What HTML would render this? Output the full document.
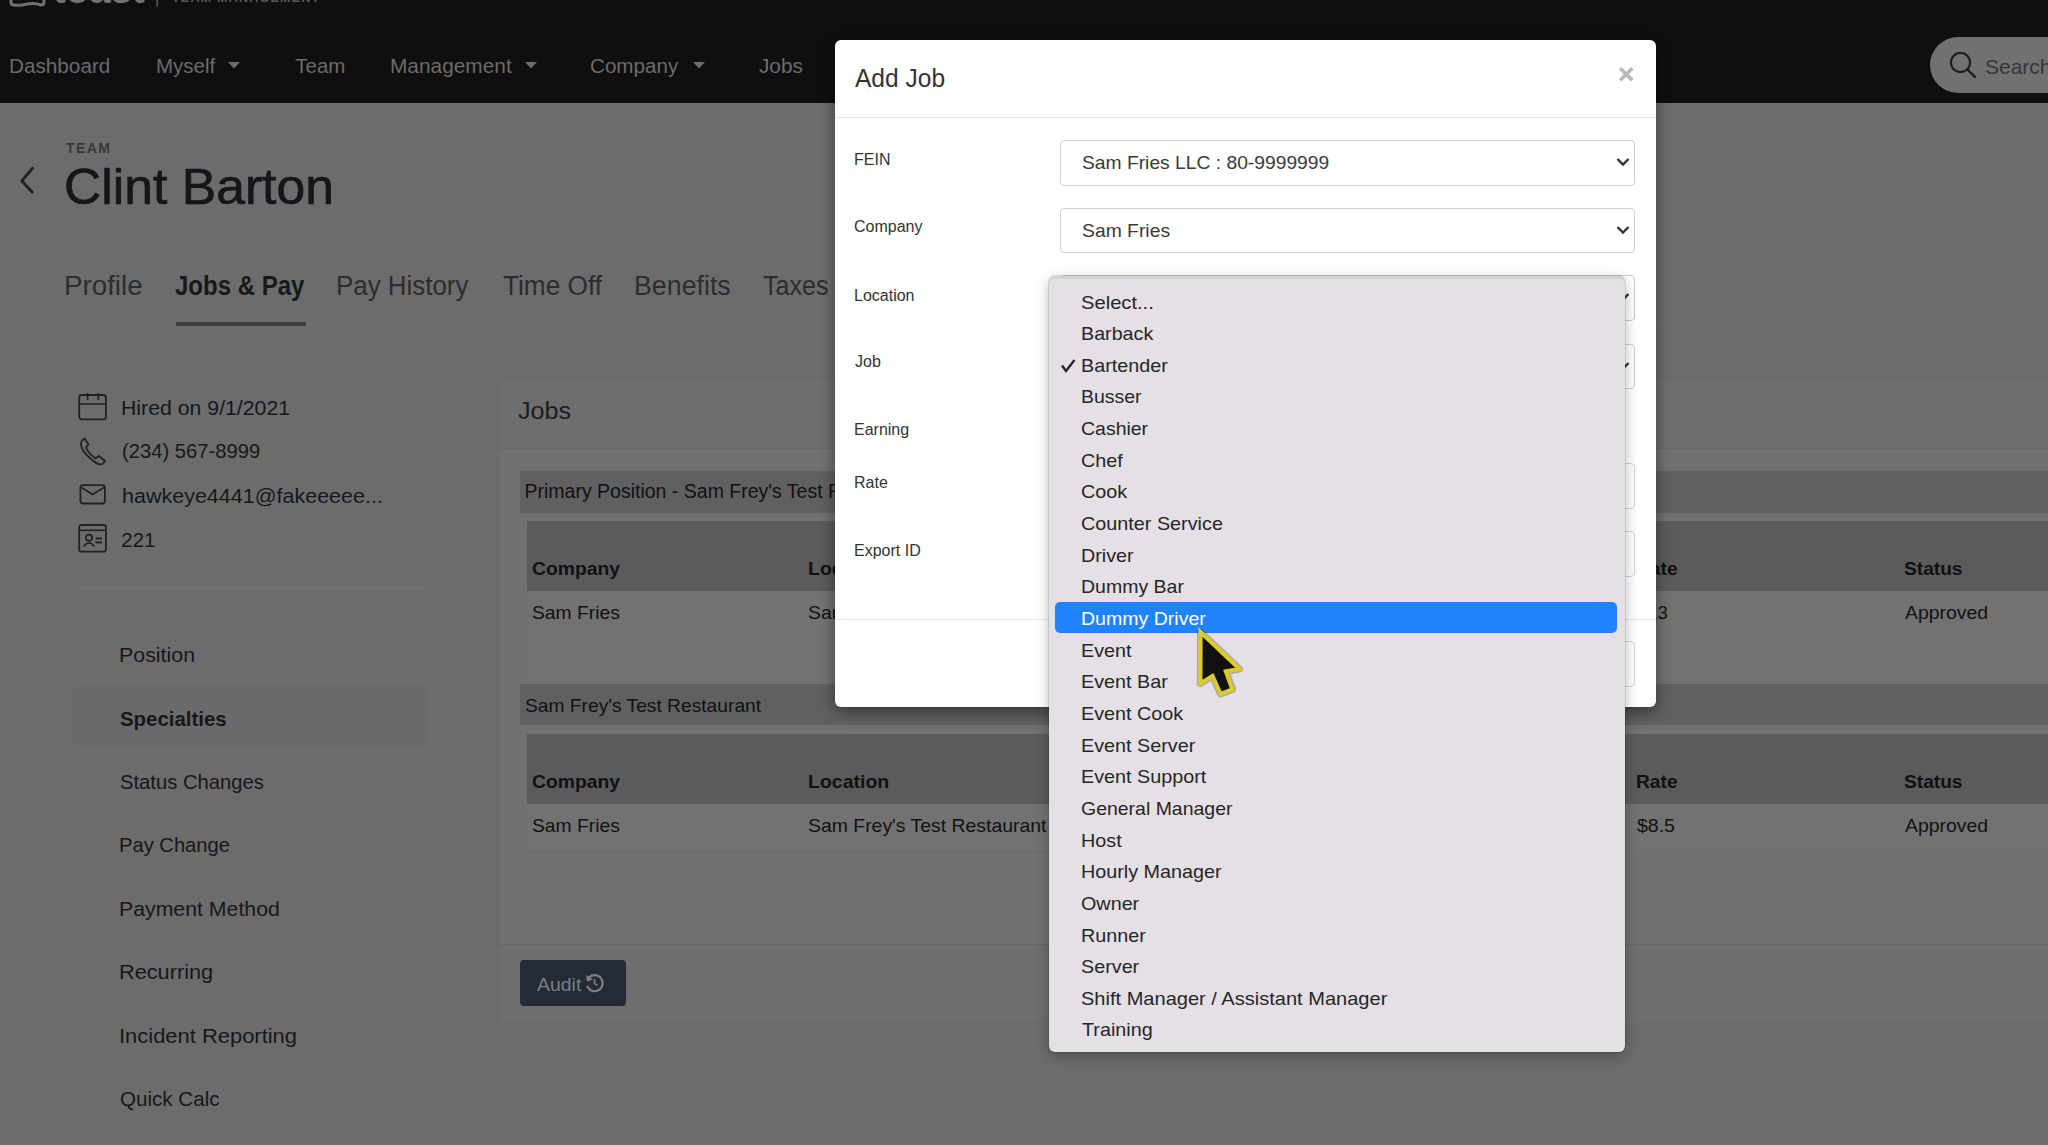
<!DOCTYPE html><html><head><meta charset="utf-8"><style>
html,body{margin:0;padding:0;}
body{width:2048px;height:1145px;overflow:hidden;position:relative;background:#6c6c6c;font-family:"Liberation Sans",sans-serif;}
.t{position:absolute;white-space:nowrap;transform-origin:0 0;}
.r{position:absolute;}
svg{position:absolute;overflow:visible;}
</style></head><body>
<div class="r" style="left:0px;top:0px;width:2048px;height:103px;background:#0f0f0f;"></div>
<svg style="left:0;top:0" width="340" height="10"><path d="M11 -6 L11 2 Q11 5 14 5 Q20 6 27 4 Q35 2.5 41 5 Q44 5 44 2 L44 -6" fill="none" stroke="#707070" stroke-width="3"/><rect x="156.5" y="-3" width="1.5" height="9.5" fill="#5e5e5e"/></svg>
<div class="t" style="left:53.00px;top:-28.97px;font-size:38px;line-height:38px;color:#727272;font-weight:700;transform:scaleX(1.0110);">toast</div>
<div class="t" style="left:171.50px;top:-8.38px;font-size:12.5px;line-height:12.5px;color:#5a5a5a;font-weight:700;letter-spacing:1.2px;transform:scaleX(1.0034);">TEAM MANAGEMENT</div>
<div class="t" style="left:8.98px;top:56.25px;font-size:20.5px;line-height:20.5px;color:#6b6b6b;transform:scaleX(1.0103);">Dashboard</div>
<div class="t" style="left:156.00px;top:56.25px;font-size:20.5px;line-height:20.5px;color:#6b6b6b;">Myself</div>
<div class="t" style="left:295.30px;top:56.25px;font-size:20.5px;line-height:20.5px;color:#6b6b6b;">Team</div>
<div class="t" style="left:389.67px;top:56.25px;font-size:20.5px;line-height:20.5px;color:#6b6b6b;transform:scaleX(1.0169);">Management</div>
<div class="t" style="left:590.49px;top:56.25px;font-size:20.5px;line-height:20.5px;color:#6b6b6b;transform:scaleX(1.0057);">Company</div>
<div class="t" style="left:758.80px;top:56.25px;font-size:20.5px;line-height:20.5px;color:#6b6b6b;transform:scaleX(1.0116);">Jobs</div>
<svg style="left:228px;top:62px" width="12" height="7"><path d="M0 0 L12 0 L6 6.5 Z" fill="#6b6b6b"/></svg>
<svg style="left:525px;top:62px" width="12" height="7"><path d="M0 0 L12 0 L6 6.5 Z" fill="#6b6b6b"/></svg>
<svg style="left:693px;top:62px" width="12" height="7"><path d="M0 0 L12 0 L6 6.5 Z" fill="#6b6b6b"/></svg>
<div class="r" style="left:1929.7px;top:37px;width:200px;height:56px;background:#717171;border-radius:28px;"></div>
<svg style="left:1945px;top:48px" width="36" height="36"><circle cx="15.5" cy="14.5" r="9.6" fill="none" stroke="#1a1f26" stroke-width="2.2"/><path d="M22.3 21.3 L29.8 28.8" stroke="#1a1f26" stroke-width="2.4" stroke-linecap="round"/></svg>
<div class="t" style="left:1985.00px;top:56.02px;font-size:21px;line-height:21px;color:#363636;">Search</div>
<svg style="left:0;top:150px" width="60" height="60"><path d="M32.5 18.3 L21.8 30.9 L32.2 42" fill="none" stroke="#1c2228" stroke-width="2.9" stroke-linecap="round" stroke-linejoin="round"/></svg>
<div class="t" style="left:65.60px;top:139.90px;font-size:15px;line-height:15px;color:#35383b;font-weight:700;letter-spacing:1.5px;transform:scaleX(0.9348);">TEAM</div>
<div class="t" style="left:63.53px;top:161.98px;font-size:50px;line-height:50px;color:#141619;transform:scaleX(1.0332);-webkit-text-stroke:0.7px #141619;">Clint Barton</div>
<div class="t" style="left:63.55px;top:273.14px;font-size:27px;line-height:27px;color:#2b2d2f;transform:scaleX(1.0270);">Profile</div>
<div class="t" style="left:174.61px;top:273.14px;font-size:27px;line-height:27px;color:#17191b;font-weight:700;transform:scaleX(0.8889);">Jobs &amp; Pay</div>
<div class="t" style="left:336.48px;top:273.14px;font-size:27px;line-height:27px;color:#2b2d2f;transform:scaleX(0.9588);">Pay History</div>
<div class="t" style="left:502.73px;top:273.14px;font-size:27px;line-height:27px;color:#2b2d2f;transform:scaleX(0.9703);">Time Off</div>
<div class="t" style="left:633.82px;top:273.14px;font-size:27px;line-height:27px;color:#2b2d2f;transform:scaleX(0.9916);">Benefits</div>
<div class="t" style="left:762.77px;top:273.14px;font-size:27px;line-height:27px;color:#2b2d2f;transform:scaleX(0.9275);">Taxes</div>
<div class="r" style="left:65px;top:324px;width:1990px;height:1.2px;background:#727272;"></div>
<div class="r" style="left:175.5px;top:321.5px;width:130px;height:4.5px;background:#3e3e3e;border-radius:1px;"></div>
<svg style="left:78px;top:392px" width="30" height="30"><rect x="1.2" y="3" width="26.7" height="24.4" rx="2.6" fill="none" stroke="#1f2225" stroke-width="1.8"/><path d="M1.5 12 H27.5 M9.6 1 V8 M20.3 1 V8" stroke="#1f2225" stroke-width="1.7"/></svg>
<svg style="left:78px;top:436px" width="30" height="30"><path d="M6.5 2.5 L10.5 8.5 L8 11.5 Q10 17 17.5 22.5 L21 20 L27 25 L24.5 28 Q20 29.5 13 23 Q4 15.5 3 9 Q2.5 5 6.5 2.5 Z" fill="none" stroke="#1f2225" stroke-width="1.8" stroke-linejoin="round"/></svg>
<svg style="left:79px;top:484px" width="30" height="24"><rect x="1.4" y="1.2" width="24.5" height="18.3" rx="2.5" fill="none" stroke="#1f2225" stroke-width="1.8"/><path d="M2.5 3.5 L13.6 10.5 L24.8 3.5" fill="none" stroke="#1f2225" stroke-width="1.8"/></svg>
<svg style="left:78px;top:524px" width="30" height="30"><rect x="1.2" y="1" width="26.7" height="26.7" rx="2.2" fill="none" stroke="#1f2225" stroke-width="1.8"/><path d="M1.5 6.3 H27.5" stroke="#1f2225" stroke-width="1.6"/><circle cx="11" cy="13.8" r="3.1" fill="none" stroke="#1f2225" stroke-width="1.7"/><path d="M5.5 22.5 Q11 15.5 16.5 22.5" fill="none" stroke="#1f2225" stroke-width="1.7"/><path d="M17.5 14.5 H24 M17.5 18.5 H24" stroke="#1f2225" stroke-width="1.8"/></svg>
<div class="t" style="left:120.92px;top:397.75px;font-size:20.5px;line-height:20.5px;color:#15181b;transform:scaleX(1.0375);">Hired on 9/1/2021</div>
<div class="t" style="left:122.01px;top:441.45px;font-size:20.5px;line-height:20.5px;color:#15181b;transform:scaleX(0.9855);">(234) 567-8999</div>
<div class="t" style="left:121.95px;top:485.85px;font-size:20.5px;line-height:20.5px;color:#15181b;transform:scaleX(1.0488);">hawkeye4441@fakeeeee...</div>
<div class="t" style="left:121.30px;top:529.55px;font-size:20.5px;line-height:20.5px;color:#15181b;">221</div>
<div class="r" style="left:76px;top:588px;width:351px;height:1.3px;background:#747474;"></div>
<div class="r" style="left:73.5px;top:683px;width:353.5px;height:65px;background:#6a6a6a;"></div>
<div class="t" style="left:118.56px;top:644.42px;font-size:21px;line-height:21px;color:#15181b;transform:scaleX(1.0181);">Position</div>
<div class="t" style="left:119.63px;top:708.12px;font-size:21px;line-height:21px;color:#15181b;font-weight:700;transform:scaleX(0.9722);">Specialties</div>
<div class="t" style="left:119.64px;top:771.42px;font-size:21px;line-height:21px;color:#15181b;transform:scaleX(0.9628);">Status Changes</div>
<div class="t" style="left:118.68px;top:834.42px;font-size:21px;line-height:21px;color:#15181b;transform:scaleX(0.9602);">Pay Change</div>
<div class="t" style="left:118.57px;top:897.82px;font-size:21px;line-height:21px;color:#15181b;transform:scaleX(1.0128);">Payment Method</div>
<div class="t" style="left:118.53px;top:961.42px;font-size:21px;line-height:21px;color:#15181b;transform:scaleX(1.0341);">Recurring</div>
<div class="t" style="left:118.51px;top:1024.62px;font-size:21px;line-height:21px;color:#15181b;transform:scaleX(1.0443);">Incident Reporting</div>
<div class="t" style="left:119.62px;top:1087.62px;font-size:21px;line-height:21px;color:#15181b;transform:scaleX(0.9800);">Quick Calc</div>
<div class="r" style="left:498px;top:378px;width:1600px;height:643px;background:#717171;box-sizing:border-box;border:1.3px solid #686868;"></div>
<div class="r" style="left:499px;top:379px;width:1600px;height:69px;background:#6e6e6e;"></div>
<div class="r" style="left:499px;top:448px;width:1600px;height:1.3px;background:#686868;"></div>
<div class="r" style="left:499px;top:945px;width:1600px;height:75.5px;background:#6e6e6e;"></div>
<div class="r" style="left:499px;top:944px;width:1600px;height:1.3px;background:#666666;"></div>
<div class="t" style="left:517.93px;top:400.11px;font-size:23.5px;line-height:23.5px;color:#1c1c1c;transform:scaleX(1.0708);">Jobs</div>
<div class="r" style="left:519.5px;top:470.5px;width:1600px;height:42.5px;background:#606060;"></div>
<div class="r" style="left:526.5px;top:521px;width:1600px;height:69.5px;background:#5b5b5b;"></div>
<div class="r" style="left:526.5px;top:590.5px;width:1600px;height:91.5px;background:#727272;"></div>
<div class="r" style="left:519.5px;top:683.5px;width:1600px;height:41.5px;background:#606060;"></div>
<div class="r" style="left:526.5px;top:734px;width:1600px;height:70px;background:#5b5b5b;"></div>
<div class="r" style="left:526.5px;top:804px;width:1600px;height:47px;background:#727272;"></div>
<div class="r" style="left:526.5px;top:850.5px;width:540px;height:1.2px;background:#6a6a6a;"></div>
<div class="t" style="left:524.50px;top:482.39px;font-size:19.5px;line-height:19.5px;color:#111111;">Primary Position - Sam Frey's Test Restaurant</div>
<div class="t" style="left:531.96px;top:560.04px;font-size:18.5px;line-height:18.5px;color:#111111;font-weight:700;transform:scaleX(1.0434);">Company</div>
<div class="t" style="left:807.95px;top:560.04px;font-size:18.5px;line-height:18.5px;color:#111111;font-weight:700;transform:scaleX(1.0533);">Location</div>
<div class="t" style="left:1635.96px;top:560.04px;font-size:18.5px;line-height:18.5px;color:#111111;font-weight:700;transform:scaleX(1.0385);">Rate</div>
<div class="t" style="left:1903.97px;top:560.04px;font-size:18.5px;line-height:18.5px;color:#111111;font-weight:700;transform:scaleX(1.0345);">Status</div>
<div class="t" style="left:531.96px;top:604.04px;font-size:18.5px;line-height:18.5px;color:#111111;transform:scaleX(1.0434);">Sam Fries</div>
<div class="t" style="left:807.95px;top:604.04px;font-size:18.5px;line-height:18.5px;color:#111111;transform:scaleX(1.0487);">Sam Frey's Test Restaurant</div>
<div class="t" style="left:1637.00px;top:604.04px;font-size:18.5px;line-height:18.5px;color:#111111;">$13</div>
<div class="t" style="left:1905.00px;top:604.04px;font-size:18.5px;line-height:18.5px;color:#111111;transform:scaleX(1.0487);">Approved</div>
<div class="t" style="left:531.96px;top:773.34px;font-size:18.5px;line-height:18.5px;color:#111111;font-weight:700;transform:scaleX(1.0434);">Company</div>
<div class="t" style="left:807.95px;top:773.34px;font-size:18.5px;line-height:18.5px;color:#111111;font-weight:700;transform:scaleX(1.0533);">Location</div>
<div class="t" style="left:1635.96px;top:773.34px;font-size:18.5px;line-height:18.5px;color:#111111;font-weight:700;transform:scaleX(1.0385);">Rate</div>
<div class="t" style="left:1903.97px;top:773.34px;font-size:18.5px;line-height:18.5px;color:#111111;font-weight:700;transform:scaleX(1.0345);">Status</div>
<div class="t" style="left:531.96px;top:817.04px;font-size:18.5px;line-height:18.5px;color:#111111;transform:scaleX(1.0434);">Sam Fries</div>
<div class="t" style="left:807.95px;top:817.04px;font-size:18.5px;line-height:18.5px;color:#111111;transform:scaleX(1.0487);">Sam Frey's Test Restaurant</div>
<div class="t" style="left:1637.00px;top:817.04px;font-size:18.5px;line-height:18.5px;color:#111111;transform:scaleX(1.0543);">$8.5</div>
<div class="t" style="left:1905.00px;top:817.04px;font-size:18.5px;line-height:18.5px;color:#111111;transform:scaleX(1.0487);">Approved</div>
<div class="t" style="left:525.49px;top:695.92px;font-size:19px;line-height:19px;color:#111111;transform:scaleX(1.0112);">Sam Frey's Test Restaurant</div>
<div class="r" style="left:519.5px;top:960px;width:106.5px;height:46px;background:#252b35;border-radius:4px;"></div>
<div class="t" style="left:536.70px;top:974.52px;font-size:19px;line-height:19px;color:#7b7f85;transform:scaleX(1.0233);">Audit</div>
<svg style="left:584px;top:972px" width="22" height="22"><path d="M4.5 6 A8 8 0 1 1 3.2 14" fill="none" stroke="#7b7f85" stroke-width="2.2"/><path d="M2 3 L3 9.5 L9 7.5 Z" fill="#7b7f85"/><path d="M10.5 7 V11.5 L13.5 13.5" fill="none" stroke="#7b7f85" stroke-width="1.6"/></svg>
<div class="r" style="left:835px;top:40px;width:821px;height:667px;background:#fff;border-radius:6px;box-shadow:0 5px 15px rgba(0,0,0,.45);"></div>
<div class="t" style="left:855.00px;top:66.44px;font-size:25px;line-height:25px;color:#333333;transform:scaleX(0.9813);">Add Job</div>
<svg style="left:1617px;top:65px" width="20" height="20"><path d="M3.2 3.2 L15.3 15.3 M15.3 3.2 L3.2 15.3" stroke="#b8b6ba" stroke-width="3.6"/></svg>
<div class="r" style="left:835px;top:117px;width:821px;height:1.3px;background:#e5e5e5;"></div>
<div class="t" style="left:854.00px;top:151.86px;font-size:16px;line-height:16px;color:#333333;">FEIN</div>
<div class="t" style="left:854.00px;top:219.46px;font-size:16px;line-height:16px;color:#333333;">Company</div>
<div class="t" style="left:854.00px;top:287.56px;font-size:16px;line-height:16px;color:#333333;">Location</div>
<div class="t" style="left:855.00px;top:354.46px;font-size:16px;line-height:16px;color:#333333;">Job</div>
<div class="t" style="left:854.00px;top:422.06px;font-size:16px;line-height:16px;color:#333333;">Earning</div>
<div class="t" style="left:854.00px;top:475.16px;font-size:16px;line-height:16px;color:#333333;">Rate</div>
<div class="t" style="left:854.00px;top:542.76px;font-size:16px;line-height:16px;color:#333333;">Export ID</div>
<div class="r" style="left:1060px;top:140.3px;width:575px;height:45.5px;box-sizing:border-box;border:1.3px solid #cfcfcf;border-radius:4px;background:#fff;"></div>
<div class="r" style="left:1060px;top:207.5px;width:575px;height:45.5px;box-sizing:border-box;border:1.3px solid #cfcfcf;border-radius:4px;background:#fff;"></div>
<div class="r" style="left:1060px;top:275.3px;width:575px;height:45.5px;box-sizing:border-box;border:1.3px solid #cfcfcf;border-radius:4px;background:#fff;"></div>
<div class="r" style="left:1060px;top:343.5px;width:575px;height:45.5px;box-sizing:border-box;border:1.3px solid #cfcfcf;border-radius:4px;background:#fff;"></div>
<svg style="left:1616px;top:157.3px" width="14" height="12"><path d="M1.5 2 L7 7.5 L12.5 2" fill="none" stroke="#333" stroke-width="2.4"/></svg>
<svg style="left:1616px;top:224.5px" width="14" height="12"><path d="M1.5 2 L7 7.5 L12.5 2" fill="none" stroke="#333" stroke-width="2.4"/></svg>
<svg style="left:1616px;top:292.3px" width="14" height="12"><path d="M1.5 2 L7 7.5 L12.5 2" fill="none" stroke="#333" stroke-width="2.4"/></svg>
<svg style="left:1616px;top:360.5px" width="14" height="12"><path d="M1.5 2 L7 7.5 L12.5 2" fill="none" stroke="#333" stroke-width="2.4"/></svg>
<div class="r" style="left:1060px;top:463px;width:575px;height:46px;box-sizing:border-box;border:1.3px solid #d5d5d5;border-radius:4px;background:#fff;"></div>
<div class="r" style="left:1060px;top:531px;width:575px;height:46px;box-sizing:border-box;border:1.3px solid #d5d5d5;border-radius:4px;background:#fff;"></div>
<div class="r" style="left:1060px;top:641px;width:575px;height:45.5px;box-sizing:border-box;border:1.3px solid #d5d5d5;border-radius:4px;background:#fff;"></div>
<div class="r" style="left:835px;top:619px;width:821px;height:1.3px;background:#e5e5e5;"></div>
<div class="t" style="left:1082.36px;top:153.84px;font-size:18.5px;line-height:18.5px;color:#3a3a3a;transform:scaleX(1.0407);">Sam Fries LLC : 80-9999999</div>
<div class="t" style="left:1082.36px;top:221.54px;font-size:18.5px;line-height:18.5px;color:#3a3a3a;transform:scaleX(1.0446);">Sam Fries</div>
<div class="r" style="left:1048.5px;top:275.5px;width:576px;height:776px;background:#e4e0e5;border-radius:6px;box-shadow:inset 0 3px 0 #d5d2d7, 0 0 0 1px rgba(0,0,0,.10), 0 4px 14px rgba(0,0,0,.28);"></div>
<div class="r" style="left:1055px;top:602px;width:562px;height:31px;background:#2083fe;border-radius:5px;"></div>
<div class="t" style="left:1080.94px;top:292.52px;font-size:19px;line-height:19px;color:#262626;transform:scaleX(1.0606);">Select...</div>
<div class="t" style="left:1080.96px;top:324.17px;font-size:19px;line-height:19px;color:#262626;transform:scaleX(1.0362);">Barback</div>
<div class="t" style="left:1080.96px;top:355.82px;font-size:19px;line-height:19px;color:#262626;transform:scaleX(1.0400);">Bartender</div>
<div class="t" style="left:1080.98px;top:387.47px;font-size:19px;line-height:19px;color:#262626;transform:scaleX(1.0241);">Busser</div>
<div class="t" style="left:1080.97px;top:419.12px;font-size:19px;line-height:19px;color:#262626;transform:scaleX(1.0250);">Cashier</div>
<div class="t" style="left:1080.96px;top:450.77px;font-size:19px;line-height:19px;color:#262626;transform:scaleX(1.0400);">Chef</div>
<div class="t" style="left:1080.96px;top:482.42px;font-size:19px;line-height:19px;color:#262626;transform:scaleX(1.0400);">Cook</div>
<div class="t" style="left:1080.96px;top:514.07px;font-size:19px;line-height:19px;color:#262626;transform:scaleX(1.0415);">Counter Service</div>
<div class="t" style="left:1080.96px;top:545.72px;font-size:19px;line-height:19px;color:#262626;transform:scaleX(1.0400);">Driver</div>
<div class="t" style="left:1080.97px;top:577.37px;font-size:19px;line-height:19px;color:#262626;transform:scaleX(1.0263);">Dummy Bar</div>
<div class="t" style="left:1080.97px;top:609.02px;font-size:19px;line-height:19px;color:#ffffff;transform:scaleX(1.0283);">Dummy Driver</div>
<div class="t" style="left:1080.96px;top:640.67px;font-size:19px;line-height:19px;color:#262626;transform:scaleX(1.0400);">Event</div>
<div class="t" style="left:1080.96px;top:672.32px;font-size:19px;line-height:19px;color:#262626;transform:scaleX(1.0400);">Event Bar</div>
<div class="t" style="left:1080.96px;top:703.97px;font-size:19px;line-height:19px;color:#262626;transform:scaleX(1.0400);">Event Cook</div>
<div class="t" style="left:1080.96px;top:735.62px;font-size:19px;line-height:19px;color:#262626;transform:scaleX(1.0400);">Event Server</div>
<div class="t" style="left:1080.96px;top:767.27px;font-size:19px;line-height:19px;color:#262626;transform:scaleX(1.0400);">Event Support</div>
<div class="t" style="left:1080.98px;top:798.92px;font-size:19px;line-height:19px;color:#262626;transform:scaleX(1.0245);">General Manager</div>
<div class="t" style="left:1080.96px;top:830.57px;font-size:19px;line-height:19px;color:#262626;transform:scaleX(1.0400);">Host</div>
<div class="t" style="left:1080.96px;top:862.22px;font-size:19px;line-height:19px;color:#262626;transform:scaleX(1.0400);">Hourly Manager</div>
<div class="t" style="left:1080.96px;top:893.87px;font-size:19px;line-height:19px;color:#262626;transform:scaleX(1.0400);">Owner</div>
<div class="t" style="left:1080.96px;top:925.52px;font-size:19px;line-height:19px;color:#262626;transform:scaleX(1.0400);">Runner</div>
<div class="t" style="left:1080.96px;top:957.17px;font-size:19px;line-height:19px;color:#262626;transform:scaleX(1.0400);">Server</div>
<div class="t" style="left:1080.95px;top:988.82px;font-size:19px;line-height:19px;color:#262626;transform:scaleX(1.0547);">Shift Manager / Assistant Manager</div>
<div class="t" style="left:1082.00px;top:1020.47px;font-size:19px;line-height:19px;color:#262626;transform:scaleX(1.0403);">Training</div>
<svg style="left:1058px;top:356px" width="20" height="20"><path d="M4 9.5 L8 15 L16.5 4" fill="none" stroke="#262626" stroke-width="2.3"/></svg>
<svg style="left:1185px;top:615px" width="70" height="90"><path d="M15.5 17 L15.3 68.5 L27.5 61 L35.5 79 L47.5 74.5 L41 56.5 L54.5 54 Z" fill="none" stroke="rgba(0,0,0,0.25)" stroke-width="7" stroke-linejoin="round"/><path d="M15.5 17 L15.3 68.5 L27.5 61 L35.5 79 L47.5 74.5 L41 56.5 L54.5 54 Z" fill="#111" stroke="#dcc92b" stroke-width="4.3" stroke-linejoin="miter"/></svg>
</body></html>
